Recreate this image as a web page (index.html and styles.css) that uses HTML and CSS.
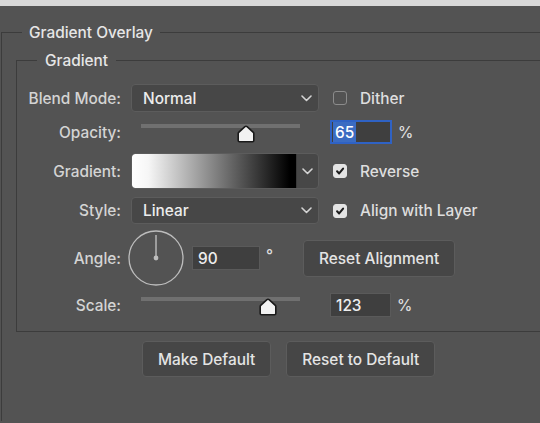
FILE: index.html
```html
<!DOCTYPE html>
<html lang="en">
<head>
<meta charset="utf-8">
<title>Gradient Overlay</title>
<link rel="stylesheet" href="styles.css">
</head>
<body>
<div class="topbar"></div>
<main class="panel">
  <fieldset class="group group-outer">
    <legend class="legend legend-outer">Gradient Overlay</legend>
    <fieldset class="group group-inner">
      <legend class="legend legend-inner">Gradient</legend>

      <div class="row row-blend">
        <span class="label">Blend Mode:</span>
        <div class="select"><span>Normal</span><svg class="chev" viewBox="0 0 11 7" width="11" height="7"><path d="M1 1 L5.5 5.5 L10 1"/></svg></div>
        <div class="check"><span class="box"></span><span>Dither</span></div>
      </div>

      <div class="row row-opacity">
        <span class="label">Opacity:</span>
        <div class="slider">
          <div class="track"></div>
          <svg class="thumb" style="left: 66%" viewBox="0 0 18 18" width="18" height="18"><path d="M9 1.2 Q9.6 1.2 10.1 1.7 L16.3 7.4 Q16.8 7.9 16.8 8.6 V15.6 Q16.8 16.8 15.6 16.8 H2.4 Q1.2 16.8 1.2 15.6 V8.6 Q1.2 7.9 1.7 7.4 L7.9 1.7 Q8.4 1.2 9 1.2 Z"/></svg>
        </div>
        <div class="numwrap"><span class="num num-focus"><span class="sel">65</span></span><span class="unit">%</span></div>
      </div>

      <div class="row row-gradient">
        <span class="label">Gradient:</span>
        <div class="gpicker"><div class="gpreview"></div><div class="gchev"><svg class="chev" viewBox="0 0 11 7" width="11" height="7"><path d="M1 1 L5.5 5.5 L10 1"/></svg></div></div>
        <div class="check"><span class="box box-on"><svg viewBox="0 0 14 14" width="14" height="14"><path d="M3.6 7.4 L6 9.8 L10.6 4.2"/></svg></span><span>Reverse</span></div>
      </div>

      <div class="row row-style">
        <span class="label">Style:</span>
        <div class="select"><span>Linear</span><svg class="chev" viewBox="0 0 11 7" width="11" height="7"><path d="M1 1 L5.5 5.5 L10 1"/></svg></div>
        <div class="check"><span class="box box-on"><svg viewBox="0 0 14 14" width="14" height="14"><path d="M3.6 7.4 L6 9.8 L10.6 4.2"/></svg></span><span>Align with Layer</span></div>
      </div>

      <div class="row row-angle">
        <span class="label">Angle:</span>
        <div class="angle-controls">
          <svg class="dial" viewBox="0 0 56 56" width="56" height="56"><circle class="dial-ring" cx="28" cy="28" r="27"/><line class="dial-hand" x1="28" y1="28" x2="28" y2="5"/><circle class="dial-dot" cx="28" cy="28" r="2.4"/></svg>
          <span class="num num-angle">90</span>
          <span class="deg">°</span>
          <button class="btn btn-align">Reset Alignment</button>
        </div>
      </div>

      <div class="row row-scale">
        <span class="label">Scale:</span>
        <div class="slider">
          <div class="track"></div>
          <svg class="thumb" style="left: 80%" viewBox="0 0 18 18" width="18" height="18"><path d="M9 1.2 Q9.6 1.2 10.1 1.7 L16.3 7.4 Q16.8 7.9 16.8 8.6 V15.6 Q16.8 16.8 15.6 16.8 H2.4 Q1.2 16.8 1.2 15.6 V8.6 Q1.2 7.9 1.7 7.4 L7.9 1.7 Q8.4 1.2 9 1.2 Z"/></svg>
        </div>
        <div class="numwrap"><span class="num">123</span><span class="unit">%</span></div>
      </div>
    </fieldset>

    <div class="actions">
      <button class="btn">Make Default</button>
      <button class="btn">Reset to Default</button>
    </div>
  </fieldset>
</main>
</body>
</html>
```

FILE: styles.css
```css
* { box-sizing: border-box; }

html, body {
  margin: 0;
  height: 100%;
  overflow: hidden;
  background: #535353;
}

body {
  font-family: Inter, "Liberation Sans", sans-serif;
  font-size: 15.4px;
  font-weight: 500;
  color: #d8d8d8;
}

.topbar {
  height: 6px;
  background: #d8d8d8;
}

.panel {
  padding: 18px 0 0 1px;
}

.group {
  margin: 0;
  border: 1px solid #3c3c3c;
  border-right: 0;
  min-width: 0;
}

.group-outer {
  border-bottom: 0;
  padding: 11px 0 44px 14px;
}

.group-inner {
  padding: 15px 0 14px 0;
}

.legend {
  line-height: 17px;
  color: #e6e6e6;
}

.legend-outer {
  margin-left: 6px;
  padding: 0 7px;
}

.legend-inner {
  margin-left: 20px;
  padding: 0 8px;
}

.row {
  display: grid;
  grid-template-columns: 114px 188px 1fr;
  align-items: center;
}

.row-blend { height: 28px; }
.row-opacity { margin-top: 8px; height: 24px; }
.row-gradient { margin-top: 9px; height: 36px; }
.row-style { margin-top: 8px; height: 27px; }
.row-angle { margin-top: 6px; height: 56px; }
.row-scale { margin-top: 7px; height: 24px; }

.label {
  text-align: right;
  padding-right: 10px;
  color: #d4d4d4;
}

.select {
  height: 100%;
  display: flex;
  align-items: center;
  justify-content: space-between;
  padding: 0 6px 0 11px;
  background: #474747;
  border: 1px solid #5c5c5c;
  border-radius: 4px;
  color: #ececec;
}

.chev path {
  fill: none;
  stroke: #d4d4d4;
  stroke-width: 1.6;
  stroke-linecap: round;
  stroke-linejoin: round;
}

.check {
  display: flex;
  align-items: center;
  gap: 13px;
  margin-left: 14px;
  color: #dedede;
}

.box {
  width: 14px;
  height: 14px;
  border: 1.5px solid #8c8c8c;
  border-radius: 3px;
  display: flex;
  align-items: center;
  justify-content: center;
}

.box-on {
  background: #e4e4e4;
  border-color: #e4e4e4;
}

.box-on svg path {
  fill: none;
  stroke: #1c1c1c;
  stroke-width: 2.4;
  stroke-linecap: round;
  stroke-linejoin: round;
}

.slider {
  position: relative;
  height: 100%;
  margin: 0 19px 0 10px;
}

.track {
  margin-top: 4px;
  height: 4px;
  background: #707070;
}

.thumb {
  position: absolute;
  top: 5px;
  transform: translateX(-50%);
}

.thumb path {
  fill: #f2f2f2;
  stroke: #1a1a1a;
  stroke-width: 1.6;
}

.numwrap {
  display: flex;
  align-items: center;
  margin-left: 11px;
}

.num {
  height: 24px;
  width: 61px;
  display: flex;
  align-items: center;
  padding-left: 5px;
  background: #3f3f3f;
  border: 1px solid #5a5a5a;
  color: #eeeeee;
}

.num-focus {
  width: 62px;
  padding-left: 1px;
  border: 2px solid #2f62c4;
}

.sel {
  height: 100%;
  display: flex;
  align-items: center;
  padding: 0 2px;
  background: #3b6cc2;
  color: #ffffff;
}

.unit {
  margin-left: 6px;
  color: #dedede;
}

.gpicker {
  height: 100%;
  display: flex;
  background: #474747;
  border: 1px solid #5c5c5c;
  border-radius: 4px;
  overflow: hidden;
}

.gpreview {
  flex: 1;
  background: linear-gradient(90deg, #ffffff 0%, #f6f6f6 10%, #000000 96%);
  border-radius: 3px 0 0 3px;
}

.gchev {
  width: 22px;
  display: flex;
  align-items: center;
  justify-content: center;
  border-left: 1px solid #3a3a3a;
}

.angle-controls {
  grid-column: 2 / 4;
  display: flex;
  align-items: center;
}

.dial {
  margin-left: -3px;
}

.dial-ring {
  fill: none;
  stroke: #bdbdbd;
  stroke-width: 1.3;
}

.dial-hand {
  stroke: #bdbdbd;
  stroke-width: 1.4;
}

.dial-dot {
  fill: #bdbdbd;
}

.num-angle {
  width: 68px;
  margin-left: 8px;
}

.deg {
  width: 43px;
  padding-left: 6px;
  align-self: center;
  margin-top: -6px;
  color: #dedede;
}

.btn {
  height: 36px;
  padding: 0 15px;
  font: inherit;
  color: #e4e4e4;
  background: #464646;
  border: 1px solid #5c5c5c;
  border-radius: 4px;
}

.btn-align {
  height: 37px;
}

.actions {
  display: flex;
  gap: 15px;
  margin-top: 9px;
  padding-left: 126px;
}
```
